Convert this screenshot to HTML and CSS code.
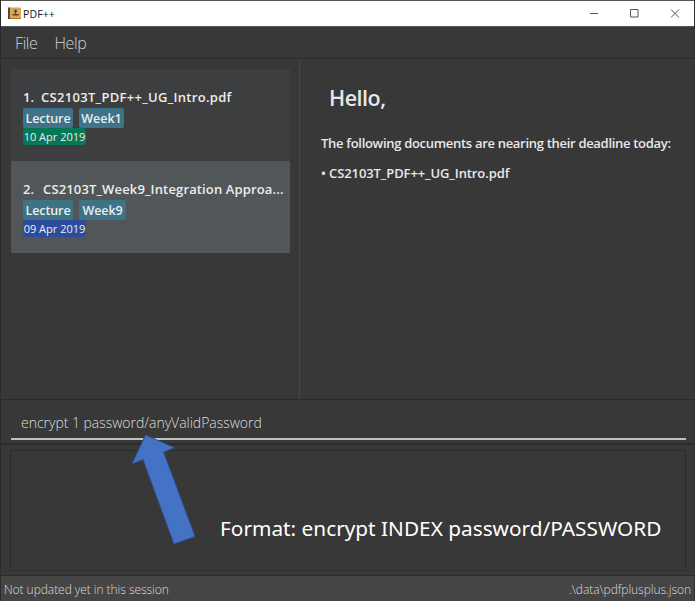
FILE: index.html
```
<!DOCTYPE html>
<html lang="en">
<head>
<meta charset="utf-8">
<title>PDF++</title>
<link rel="stylesheet" href="styles.css">
</head>
<body>
<div class="window">
  <header class="titlebar">
    <svg class="app-icon" width="14" height="13" viewBox="0 0 14 13">
      <rect x="0.5" y="0.5" width="12.5" height="11.5" rx="1" fill="#d9a854"/>
      <rect x="0" y="0.5" width="2" height="11.5" fill="#594638"/>
      <path d="M2 11.5h11" stroke="#a9752d"/>
      <circle cx="7.5" cy="4" r="1.5" fill="#5c4526"/>
      <path d="M7 5h1v2h2.500v1.500h-6V7H7z" fill="#5c4526"/>
    </svg>
    <span class="app-name">PDF++</span>
    <svg class="controls" width="90" height="9" viewBox="0 0 90 9" fill="none" stroke="#555">
      <path d="M0 4.5h8M40.500.5h7.500v7.500h-7.500zM81 .5l8 8M89 .5l-8 8"/>
    </svg>
  </header>
  <nav class="menubar"><span class="menu-file">File</span><span class="menu-help">Help</span></nav>
  <main class="split">
    <section class="list">
      <article class="card">
        <div class="name"><span class="index">1.</span><span class="file file-one">CS2103T_PDF++_UG_Intro.pdf</span></div>
        <div class="tags"><span class="tag lecture">Lecture</span><span class="tag week-one">Week1</span></div>
        <span class="date green">10 Apr 2019</span>
      </article>
      <article class="card selected">
        <div class="name"><span class="index wide">2.</span><span class="file file-two">CS2103T_Week9_Integration Approa...</span></div>
        <div class="tags"><span class="tag lecture">Lecture</span><span class="tag week-nine">Week9</span></div>
        <span class="date blue">09 Apr 2019</span>
      </article>
    </section>
    <section class="detail">
      <h1><span>Hello,</span></h1>
      <p class="notice"><span>The following documents are nearing their deadline today:</span></p>
      <p class="due"><span>• CS2103T_PDF++_UG_Intro.pdf</span></p>
    </section>
  </main>
  <section class="command"><div class="field"><span>encrypt 1 password/anyValidPassword</span></div></section>
  <section class="result"><div class="result-box"><span class="format">Format: encrypt INDEX password/PASSWORD</span></div></section>
  <footer class="status"><span class="sync">Not updated yet in this session</span><span class="path">.\data\pdfplusplus.json</span></footer>
  <svg class="arrow" width="64" height="113" viewBox="0 0 64 113">
    <path d="M14.500 2L43.500 14.800L32.500 19L64 103.500L43 111L12 26.500L1 31z" fill="#4472c4" stroke="#2f528f" stroke-width="1"/>
  </svg>
</div>
</body>
</html>
```
FILE: styles.css
```
* { box-sizing: border-box; }
body { margin: 0; font-family: "Open Sans", "Noto Sans", sans-serif; background: #383838; }
span { white-space: nowrap; }
.window { position: relative; width: 695px; height: 601px; overflow: hidden; display: flex; flex-direction: column; border-left: 1px solid #2b2b2b; border-right: 1px solid #303030; }
.titlebar { height: 27px; flex: none; display: flex; align-items: center; margin: 0 -1px; background: #fff; border-top: 1px solid #555; border-bottom: 1px solid #555; padding: 0 15px 0 8px; }
.app-icon { margin-right: 1px; }
.app-name { font-size: 10.500px; color: #111; letter-spacing: 0.1px; }
.controls { margin-left: auto; }
.menubar { height: 32px; flex: none; display: flex; align-items: center; gap: 17px; padding-left: 14px; font-size: 16px; font-weight: 300; letter-spacing: -0.4px; color: #d0d0d0; border-bottom: 1px solid #2b2b2b; }
.split { height: 341px; flex: none; display: flex; border-bottom: 1px solid #2b2b2b; }
.list { width: 299px; padding: 10px 9px 0 10px; border-right: 1px solid #484848; height: 339px; }
.card { height: 92px; padding: 18px 0 0 12px; background: #3c3e3f; color: #ececec; overflow: hidden; }
.card.selected { background: #515658; }
.name { height: 20px; display: flex; font-size: 13px; font-weight: 600; line-height: 20px; }
.index { width: 18px; }
.index.wide { width: 20px; }
.file-one { letter-spacing: 0.3px; }
.file-two { letter-spacing: 0.14px; }
.tags { height: 20px; display: flex; gap: 6px; margin-top: 1px; }
.tag { height: 20px; border-radius: 2px; background: #3e7389; font-size: 12.500px; font-weight: 600; line-height: 21px; text-align: center; }
.lecture { width: 50px; }
.lecture, .week-nine { letter-spacing: -0.1px; }
.week-one { width: 45px; }
.week-nine { width: 47px; }
.selected .tag { background: #3e7386; }
.date { display: block; width: 63px; height: 17px; border-radius: 3px; font-size: 11px; line-height: 18px; text-align: center; }
.green { background: #047857; }
.blue { background: #2c4d9e; }
.detail { flex: 1; padding-left: 21px; color: #e8e8e8; }
h1 { margin: 23px 0 0 8px; font-size: 21.500px; line-height: 32px; font-weight: 600; letter-spacing: -0.5px; }
p { margin: 0; font-size: 13px; font-weight: 600; line-height: 20px; }
.notice { margin-top: 19px; letter-spacing: -0.3px; }
.due { margin-top: 10px; letter-spacing: -0.1px; }
.command { height: 45px; flex: none; padding: 5px 8px 0 10px; border-bottom: 2px solid #2b2b2b; }
.field { height: 35px; padding-left: 10px; border-bottom: 2px solid #c0c0c0; font-size: 14px; line-height: 35px; font-weight: 300; letter-spacing: -0.02px; color: #ddd; }
.result { height: 131px; flex: none; padding: 5px 8px 4px 9px; border-bottom: 1px solid #2b2b2b; }
.result-box { height: 121px; border: 1px solid #2b2b2b; padding: 61px 0 0 209px; }
.format { font-family: "Noto Sans", sans-serif; font-size: 20.800px; line-height: 32px; color: #fff; }
.status { height: 25px; flex: none; display: flex; justify-content: space-between; align-items: center; padding: 2px 3px 0; background: #454545; font-size: 12px; font-weight: 300; letter-spacing: -0.05px; color: #ddd; }
.arrow { position: absolute; left: 130px; top: 433px; }
```
